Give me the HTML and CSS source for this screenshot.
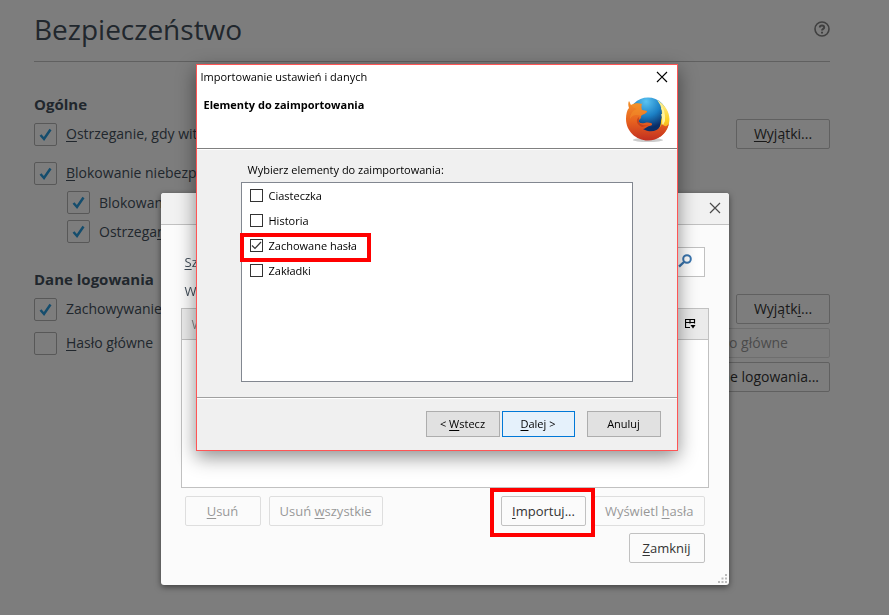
FILE: index.html
```html
<!doctype html>
<html lang="pl">
<head>
<meta charset="utf-8">
<meta name="viewport" content="width=device-width, initial-scale=1.0">
<link rel="stylesheet" href="styles.css">
<title>Bezpieczeństwo</title>
</head>
<body>
<main class="prefs">
  <header class="prefs-header">
    <h1>Bezpieczeństwo</h1>
    <a class="help" href="#" aria-label="Pomoc">
      <svg width="16" height="16" viewBox="0 0 16 16" fill="none" stroke="#808080" stroke-width="1.6"><circle cx="8" cy="8" r="7"/><path d="M5.800 6.400C5.800 3.800 10.200 3.800 10.200 6.400C10.200 7.900 8 7.900 8 9.600M8 10.700v1.700" stroke-width="2"/></svg>
    </a>
  </header>

  <section>
    <h2>Ogólne</h2>
    <div class="row">
      <label class="check"><input type="checkbox" checked><span><u>O</u>strzeganie, gdy witryny</span></label>
      <button class="btn" type="button"><u>W</u>yjątki...</button>
    </div>
    <div class="row spaced">
      <label class="check"><input type="checkbox" checked><span><u>B</u>lokowanie niebezpieczne</span></label>
    </div>
    <div class="row sub">
      <label class="check"><input type="checkbox" checked><span>Blokowanie</span></label>
    </div>
    <div class="row sub">
      <label class="check"><input type="checkbox" checked><span>Ostrzega<u>n</u>ie</span></label>
    </div>
  </section>

  <section class="logins">
    <h2>Dane logowania</h2>
    <div class="columns">
      <div class="stack">
        <label class="check"><input type="checkbox" checked><span>Zachowywanie</span></label>
        <label class="check"><input type="checkbox"><span><u>H</u>asło główne</span></label>
      </div>
      <div class="stack end">
        <button class="btn" type="button">Wyjątk<u>i</u>...</button>
        <button class="btn wide" type="button" disabled>Zmień hasło główne</button>
        <button class="btn wide" type="button">Zachowane dane logowania...</button>
      </div>
    </div>
  </section>
</main>

<div class="overlay"></div>

<div class="passwords" role="dialog" aria-label="Zachowane dane logowania">
  <div class="passwords-title">
    <button class="close" type="button" aria-label="Zamknij okno">
      <svg width="12" height="12" viewBox="0 0 12 12" stroke="#4a4a4a" stroke-width="1.2"><path d="M1 1l10 10M11 1L1 11"/></svg>
    </button>
  </div>
  <div class="passwords-body">
    <div class="search-row">
      <label for="search"><u>S</u>zukaj:</label>
      <div class="search">
        <input id="search" type="text">
        <svg width="14" height="14" viewBox="0 0 14 14" fill="none" stroke="#3a76b0"><circle cx="9" cy="5" r="3.800" stroke-width="2"/><path d="M6 8L1 12.700" stroke-width="2.400"/></svg>
      </div>
    </div>
    <p class="intro">Wymienione dane są zachowane:</p>
    <table class="tree">
      <thead>
        <tr>
          <th>Witryna</th>
          <th class="picker">
            <svg width="11" height="10" viewBox="0 0 11 10" fill="none" stroke="#000"><path d="M5 8.500H.500v-8h9v4M.500 3.500h9M5 .500v4" stroke-width="1.200"/><path d="M5.500 6h5L8 9.500z" fill="#000" stroke="none"/></svg>
          </th>
        </tr>
      </thead>
      <tbody><tr><td colspan="2"></td></tr></tbody>
    </table>
    <div class="actions">
      <button class="btn" type="button" disabled><u>U</u>suń</button>
      <button class="btn" type="button" disabled>Usuń <u>w</u>szystkie</button>
      <span class="spacer"></span>
      <span class="marked marked-import"><button class="btn" type="button"><u>I</u>mportuj...</button></span>
      <button class="btn" type="button" disabled>Wyświetl <u>h</u>asła</button>
    </div>
    <div class="actions last">
      <button class="btn" type="button"><u>Z</u>amknij</button>
    </div>
  </div>
  <svg class="grip" width="9" height="9" viewBox="0 0 9 9" fill="#bbb"><path d="M7 0h2v2H7zM7 3.500h2v2H7zM3.500 3.500h2v2h-2zM7 7h2v2H7zM3.500 7h2v2h-2zM0 7h2v2H0z"/></svg>
</div>

<form class="wizard" role="dialog" aria-label="Importowanie ustawień i danych">
  <div class="wizard-title">
    <span>Importowanie ustawień i danych</span>
    <button class="close" type="button" aria-label="Zamknij kreator">
      <svg width="12" height="12" viewBox="0 0 12 12" stroke="#000" stroke-width="1.2"><path d="M1 1l10 10M11 1L1 11"/></svg>
    </button>
  </div>
  <div class="wizard-header">
    <h3>Elementy do zaimportowania</h3>
    <svg class="logo" width="46" height="46" viewBox="0 0 46 46">
      <defs>
        <radialGradient id="globe" cx="45%" cy="10%" r="85%"><stop offset="0" stop-color="#59c3f2"/><stop offset=".45" stop-color="#1b7fc4"/><stop offset=".8" stop-color="#0b2d66"/></radialGradient>
        <linearGradient id="fox" x1="0" y1="0" x2="0" y2="1"><stop offset="0" stop-color="#f3912a"/><stop offset=".5" stop-color="#e8631f"/><stop offset="1" stop-color="#c22f20"/></linearGradient>
        <linearGradient id="tail" x1="0" y1="0" x2="0" y2="1"><stop offset="0" stop-color="#fff3a0"/><stop offset=".5" stop-color="#fcd123"/><stop offset="1" stop-color="#ee7a1e"/></linearGradient>
      </defs>
      <ellipse cx="23" cy="43" rx="15" ry="2" fill="#ccc"/>
      <circle cx="23" cy="20" r="19.500" fill="url(#globe)"/>
      <path d="M32 3C41 8 46 17 44 26C42 37 33 43 23 43C27 38 36 34 36 24C38 16 37 9 32 3z" fill="url(#tail)"/>
      <path d="M34 5q7 8 6 19l-3 6q1-8-1-13q3 1 0-6q2 0-2-6z" fill="#fff3a0"/>
      <path d="M4 4C5 5 5 7 6 8C10 6 13 6 17 7L18 5C16 8 16 11 17 13L22 14C22 17 18 17 16 19C17 22 13 22 14 25C17 28 21 24 26 26C28 27 27 29 24 29C21 30 20 32 18 32C25 36 33 35 37 27C40 30 42 30 44 26C42 37 33 43.500 23 43.500C11 43.500 1 34 1 22C1 17 2 13 4 11C3 8 3 6 4 4z" fill="url(#fox)"/>
      <path d="M6 8C10 6 13 6 17 7L18 5C16 8 16 10 17 13L22 14C21 17 17 17 16 19C11 17 7 18 5 22C5 17 8 13 12 12C9 11 7 10 6 8z" fill="#f49a2b" opacity=".4"/>
      <path d="M14 20C10 23 12 28 17 30C19 29 23 29 24 28C20 29 15 28 14 25z" fill="#a92a18" opacity=".5"/>
    </svg>
  </div>
  <div class="wizard-page">
    <p id="pick">Wybierz elementy do zaimportowania:</p>
    <div class="items" role="group" aria-labelledby="pick">
      <label class="item"><input type="checkbox"><span>Ciasteczka</span></label>
      <label class="item"><input type="checkbox"><span>Historia</span></label>
      <label class="item marked marked-item"><input type="checkbox" checked><span>Zachowane hasła</span></label>
      <label class="item"><input type="checkbox"><span>Zakładki</span></label>
    </div>
  </div>
  <div class="wizard-buttons">
    <button class="wbtn" type="button">&lt; <u>W</u>stecz</button>
    <button class="wbtn next" type="button"><u>D</u>alej &gt;</button>
    <button class="wbtn cancel" type="button">Anuluj</button>
  </div>
</form>
</body>
</html>
```

FILE: styles.css
```css
* {
    box-sizing: border-box;
}
html, body {
    height: 100%;
}
body {
    margin: 0;
    overflow: hidden;
    background: #fbfbfb;
    color: #424e5a;
    font: 14px/20px "Open Sans", "Noto Sans", sans-serif;
}
h1, h2, h3, p {
    margin: 0;
}
button, input {
    font: inherit;
    color: inherit;
    margin: 0;
}
u {
    text-underline-offset: 2px;
}

/* preferences page */
.prefs {
    padding: 0 59px 0 34px;
    white-space: nowrap;
}
.prefs-header {
    display: flex;
    justify-content: space-between;
    align-items: center;
    height: 62px;
    padding-bottom: 4px;
    margin-bottom: 30px;
    border-bottom: 1px solid #c1c1c1;
}
h1 {
    font-size: 28px;
    font-weight: normal;
    line-height: 40px;
}
.help {
    display: flex;
}
h2 {
    font-size: 15px;
    line-height: 24px;
    margin-bottom: 3px;
}
.row {
    display: flex;
    justify-content: space-between;
    align-items: center;
    height: 30px;
}
.spaced {
    margin-top: 9px;
}
.sub {
    height: 29px;
    padding-left: 33px;
}
.check {
    display: flex;
    align-items: center;
    gap: 9px;
    height: 30px;
}
.check input {
    appearance: none;
    width: 23px;
    height: 23px;
    border: 1px solid #b1b1b1;
    border-radius: 2px;
}
.check input:checked {
    background: url("data:image/svg+xml,%3Csvg xmlns='http://www.w3.org/2000/svg' viewBox='0 0 21 21'%3E%3Cpath d='M5.500 11l3.500 4 6.500-9.500' fill='none' stroke='%232a9bdb' stroke-width='2.500'/%3E%3C/svg%3E");
}
.logins {
    margin-top: 21px;
}
.columns {
    display: flex;
    justify-content: space-between;
}
.stack {
    display: flex;
    flex-direction: column;
    gap: 4px;
}
.end {
    align-items: flex-end;
}
.btn {
    height: 30px;
    min-width: 94px;
    padding: 0 10px;
    border: 1px solid #c1c1c1;
    border-radius: 2px;
    background: #fbfbfb;
    color: #333;
    white-space: nowrap;
}
.btn:disabled {
    opacity: .5;
}
.wide {
    align-self: stretch;
}
.overlay {
    position: fixed;
    inset: 0;
    background: rgba(0, 0, 0, .5);
}

/* saved passwords */
.passwords {
    position: absolute;
    top: 193px;
    left: calc(50% - 284px);
    width: 568px;
    border-radius: 3px;
    background: #fbfbfb;
    box-shadow: 0 2px 6px rgba(0, 0, 0, .5);
    font-size: 13px;
}
.close {
    display: flex;
    padding: 0;
    border: 0;
    background: none;
}
.passwords-title {
    display: flex;
    justify-content: flex-end;
    align-items: center;
    height: 32px;
    padding: 0 8px 1px 0;
    border-bottom: 1px solid #c1c1c1;
    border-radius: 3px 3px 0 0;
    background: #f1f1f1;
}
.passwords-body {
    padding: 22px 20px;
}
.search-row {
    display: flex;
    align-items: center;
    gap: 8px;
    padding: 0 4px;
}
.search {
    display: flex;
    align-items: center;
    flex: 1;
    height: 30px;
    padding: 0 12px 2px 0;
    border: 1px solid #c1c1c1;
    background: #fff;
}
.search input {
    flex: 1;
    min-width: 0;
    border: 0;
    background: none;
}
.intro {
    padding: 4px 4px 7px;
}
.tree {
    width: 100%;
    border: 1px solid #c1c1c1;
    border-collapse: collapse;
    background: #fff;
}
.tree th {
    height: 31px;
    padding: 0 10px;
    border-bottom: 1px solid #c1c1c1;
    background: #ebebeb;
    color: #8c8c8c;
    font-weight: normal;
    text-align: left;
}
.tree .picker {
    width: 34px;
    padding: 0 12px;
    line-height: 10px;
}
.tree td {
    height: 148px;
}
.actions {
    display: flex;
    gap: 8px;
    padding: 8px 4px 0;
}
.actions .btn {
    min-width: 76px;
}
.last {
    justify-content: flex-end;
    padding-top: 7px;
}
.spacer {
    flex: 1;
}
.grip {
    position: absolute;
    right: 2px;
    bottom: 2px;
}

/* red frames over the highlighted controls */
.marked {
    position: relative;
}
.marked::after {
    content: "";
    position: absolute;
    z-index: 1;
    border: 4px solid #f00;
    pointer-events: none;
}
.marked-import::after {
    inset: -8px -9px -11px -11px;
}
.marked-item::after {
    inset: 0 -14px -4px -10px;
}

/* import wizard */
.wizard {
    position: absolute;
    top: 64px;
    left: calc(50% - 249px);
    width: 482px;
    border: 1px solid #f55;
    background: #f0f0f0;
    box-shadow: 0 6px 18px rgba(0, 0, 0, .45);
    color: #000;
    font-size: 11px;
    line-height: 16px;
}
.wizard-title {
    display: flex;
    justify-content: space-between;
    align-items: center;
    height: 24px;
    padding: 0 9px 0 4px;
    background: #fff;
}
.wizard-header {
    display: flex;
    justify-content: space-between;
    height: 60px;
    padding: 8px 6px 8px 7px;
    border-bottom: 1px solid #808080;
    background: #fff;
}
h3 {
    font-size: 11px;
    line-height: 16px;
}
.wizard-page {
    padding: 12px 44px 15px;
    border-top: 1px solid #fff;
    border-bottom: 1px solid #a0a0a0;
}
.wizard-page p {
    padding: 0 7px 4px;
}
.items {
    display: flex;
    flex-direction: column;
    align-items: flex-start;
    height: 200px;
    padding-left: 8px;
    border: 1px solid #828790;
    background: #fff;
}
.item {
    display: flex;
    align-items: center;
    gap: 6px;
    height: 25px;
}
.item input {
    appearance: none;
    width: 13px;
    height: 13px;
    border: 1px solid #333;
    background: #fff;
}
.item input:checked {
    background: url("data:image/svg+xml,%3Csvg xmlns='http://www.w3.org/2000/svg' viewBox='0 0 11 11'%3E%3Cpath d='M1 5.500l3 3 6-6.500' fill='none' stroke='%23333' stroke-width='1.200'/%3E%3C/svg%3E");
}
.wizard-buttons {
    display: flex;
    justify-content: flex-end;
    gap: 2px;
    padding: 12px 16px 13px;
    border-top: 1px solid #fff;
}
.wbtn {
    width: 74px;
    height: 26px;
    padding: 0;
    border: 1px solid #adadad;
    background: #e1e1e1;
}
.next {
    width: 73px;
    border-color: #0078d7;
    background: #e5f1fb;
}
.cancel {
    margin-left: 10px;
}
```
